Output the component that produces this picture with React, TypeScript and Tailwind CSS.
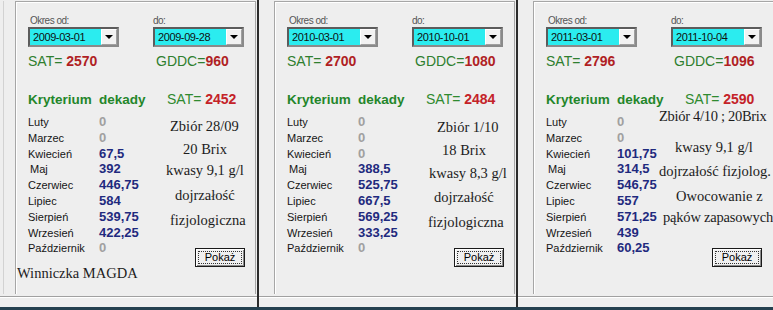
import React from 'react';

type Panel = {
  w: string;
  from: string;
  to: string;
  sat: string;
  gddc: string;
  sat2: string;
  vals: string[];
  lines: [string, string][];
  btn: string;
  footer?: string;
  first?: boolean;
};

const MONTHS = ['Luty', 'Marzec', 'Kwiecień', 'Maj', 'Czerwiec', 'Lipiec', 'Sierpień', 'Wrzesień', 'Październik'];

const PANELS: Panel[] = [
  {
    w: 'w-[257px]',
    from: '2009-03-01',
    to: '2009-09-28',
    sat: '2570',
    gddc: '960',
    sat2: '2452',
    vals: ['0', '0', '67,5', '392', '446,75', '584', '539,75', '422,25', '0'],
    lines: [
      ['Zbiór 28/09', 'ml-[30px] mt-[4px]'],
      ['20 Brix', 'ml-[43px] mt-[7px]'],
      ['kwasy 9,1 g/l', 'ml-[26px] mt-[5px]'],
      ['dojrzałość', 'ml-[35px] mt-[9px]'],
      ['fizjologiczna', 'ml-[30px] mt-[9px]'],
    ],
    btn: 'ml-[55px]',
    footer: 'Winniczka MAGDA',
    first: true,
  },
  {
    w: 'w-[257px]',
    from: '2010-03-01',
    to: '2010-10-01',
    sat: '2700',
    gddc: '1080',
    sat2: '2484',
    vals: ['0', '0', '0', '388,5', '525,75', '667,5', '569,25', '333,25', '0'],
    lines: [
      ['Zbiór 1/10', 'ml-[38px] mt-[5px]'],
      ['18 Brix', 'ml-[43px] mt-[7px]'],
      ['kwasy 8,3 g/l', 'ml-[30px] mt-[7px]'],
      ['dojrzałość', 'ml-[35px] mt-[8px]'],
      ['fizjologiczna', 'ml-[29px] mt-[9px]'],
    ],
    btn: 'ml-[55px]',
  },
  {
    w: 'w-[255px]',
    from: '2011-03-01',
    to: '2011-10-04',
    sat: '2796',
    gddc: '1096',
    sat2: '2590',
    vals: ['0', '0', '101,75', '314,5', '546,75', '557', '571,25', '439', '60,25'],
    lines: [
      ['Zbiór 4/10 ; 20Brix', 'ml-[1px] mt-[-6px] tracking-[-0.3px]'],
      ['kwasy 9,1 g/l', 'ml-[17px] mt-[15px]'],
      ['dojrzałość fizjolog.', 'ml-[1px] mt-[8px]'],
      ['Owocowanie z', 'ml-[18px] mt-[9px]'],
      ['pąków zapasowych', 'ml-[5px] mt-[5px] tracking-[-0.2px]'],
    ],
    btn: 'ml-[54px]',
  },
];

function Combo({ value }: { value: string }) {
  return (
    <div className="flex h-[20px] w-[91px] border-2 border-t-[#5c5c5c] border-l-[#5c5c5c] border-b-[#8a8a8a] border-r-[#8a8a8a]">
      <div className="flex-1 bg-[#2becef] pl-[3px] text-[11px] leading-[16px] tracking-[-0.4px] text-[#101010]">{value}</div>
      <div className="flex w-[16px] items-center justify-center border border-t-[#ffffff] border-l-[#ffffff] border-b-[#a0a0a0] border-r-[#a0a0a0] bg-[#f2f2f2]">
        <div className="h-0 w-0 border-l-[4px] border-r-[4px] border-t-[4px] border-l-transparent border-r-transparent border-t-black" />
      </div>
    </div>
  );
}

function PanelView({ p }: { p: Panel }) {
  return (
    <div className={`${p.w} flex shrink-0 flex-col overflow-hidden bg-[#eeeeee]`}>
      <div className={p.first ? 'h-[294px] overflow-hidden pl-[3px] pt-[1px]' : 'h-[294px] overflow-hidden pl-[15px] pt-[1px]'}>
        <div className={p.first ? 'h-full border-l border-[#d2d2d2] pl-[11px]' : 'h-full'}>
          <div className="h-[310px] w-[241px] border-l border-t border-r border-[#a6a6a6] pl-[12px] shadow-[inset_1px_1px_0_#ffffff]">
            {/* Okres labels */}
            <div className="mt-[13px] grid h-[12px] grid-cols-[125px_auto] text-[10px] leading-[12px] tracking-[-0.5px] text-[#555555]">
              <span className="pl-[2px]">Okres od:</span>
              <span>do:</span>
            </div>
            <div className="flex gap-[34px]">
              <Combo value={p.from} />
              <Combo value={p.to} />
            </div>
            {/* SAT / GDDC */}
            <div className="mt-[6px] grid h-[16px] grid-cols-[128px_auto] text-[14px] leading-[16px]">
              <span className="whitespace-nowrap text-[#2f7f2f]">
                SAT= <b className="text-[#b01f24]">{p.sat}</b>
              </span>
              <span className="whitespace-nowrap text-[#2f7f2f]">
                GDDC=<b className="text-[#b01f24]">{p.gddc}</b>
              </span>
            </div>
            {/* header */}
            <div className="mt-[22px] grid h-[16px] grid-cols-[71px_68px_auto] items-baseline leading-[16px]">
              <b className="text-[13.5px] text-[#24862a]">Kryterium</b>
              <b className="text-[13.5px] text-[#24862a]">dekady</b>
              <span className="whitespace-nowrap text-[14px] text-[#2f8a2f]">
                SAT= <b className="text-[#c42228]">{p.sat2}</b>
              </span>
            </div>
            {/* rows + notes */}
            <div className="mt-[7px] flex h-[153px]">
              <div className="w-[112px] shrink-0">
                {MONTHS.map((m, i) => (
                  <div key={m} className="flex h-[15.8px] items-baseline leading-[15.8px]">
                    <span className={i === 3 ? 'w-[71px] pl-[2px] text-[11px] text-[#151515]' : 'w-[71px] text-[11px] text-[#151515]'}>{m}</span>
                    <b className={p.vals[i] === '0' ? 'text-[13px] text-[#a0a0a0]' : 'text-[13px] text-[#1f2a7e]'}>{p.vals[i]}</b>
                  </div>
                ))}
              </div>
              <div className="flex min-w-0 flex-1 flex-col">
                {p.lines.map(([t, c]) => (
                  <div key={t} className={`${c} whitespace-nowrap font-['Liberation_Serif','Times_New_Roman',serif] text-[14.5px] leading-[16px] text-[#1c1c1c]`}>
                    {t}
                  </div>
                ))}
                <button className={`${p.btn} mt-auto flex h-[19px] w-[50px] shrink-0 border border-[#1a1a1a] bg-[#f0f0f0] p-[2px] shadow-[inset_1px_1px_0_#ffffff,inset_-1px_-1px_0_#8a8a8a]`}>
                  <span className="flex h-full w-full items-center justify-center border border-dotted border-[#333333] text-[11px] leading-[11px] text-black">
                    Pokaż
                  </span>
                </button>
              </div>
            </div>
            {p.footer && (
              <div className="ml-[-11px] mt-[-2px] whitespace-nowrap font-['Liberation_Serif','Times_New_Roman',serif] text-[14.5px] leading-[16px] text-[#1c1c1c]">
                {p.footer}
              </div>
            )}
          </div>
        </div>
      </div>
      <div className="h-[2px]" />
      <div className="h-px bg-[#a0a0a0]" />
      <div className="h-px bg-white" />
      <div className="flex-1" />
    </div>
  );
}

export default function App() {
  return (
    <div className="flex h-[310px] w-[773px] flex-col overflow-hidden bg-[#eeeeee] font-['Liberation_Sans',Arial,sans-serif]">
      <div className="flex h-[307px]">
        <PanelView p={PANELS[0]} />
        <div className="w-[2px] shrink-0 bg-[#2b2b2b]" />
        <PanelView p={PANELS[1]} />
        <div className="w-[2px] shrink-0 bg-[#2b2b2b]" />
        <PanelView p={PANELS[2]} />
      </div>
      <div className="h-[3px] bg-[#24404f]" />
    </div>
  );
}
